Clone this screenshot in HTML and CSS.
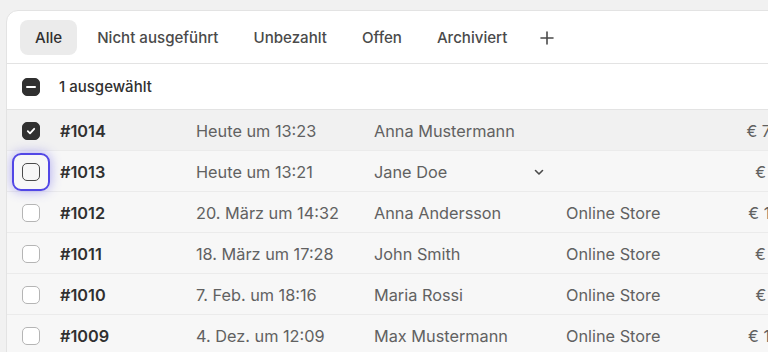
FILE: index.html
```html
<!DOCTYPE html>
<html lang="de">
<head>
    <meta charset="UTF-8">
    <meta name="viewport" content="width=device-width, initial-scale=1.0">
    <title>Bestellungen</title>
    <link rel="stylesheet" href="styles.css">
</head>
<body>

    <div class="orders-card">
        <!-- Filter tabs -->
        <div class="tabs">
            <button class="tab active">Alle</button>
            <button class="tab">Nicht ausgeführt</button>
            <button class="tab">Unbezahlt</button>
            <button class="tab">Offen</button>
            <button class="tab">Archiviert</button>
            <button class="tab add-tab" aria-label="Ansicht hinzufügen">
                <svg width="20" height="20" viewBox="0 0 20 20"><path d="M10 4v12M4 10h12" stroke="#4a4a4a" stroke-width="1.6" stroke-linecap="round"/></svg>
            </button>
        </div>

        <!-- Bulk selection -->
        <div class="bulk-bar">
            <span class="checkbox indeterminate">
                <svg width="12" height="12" viewBox="0 0 12 12"><path d="M2 6h8" stroke="#fff" stroke-width="2" stroke-linecap="round"/></svg>
            </span>
            <span class="bulk-label">1 ausgewählt</span>
        </div>

        <div class="rows">
            <div class="row selected">
                <div class="cell"><span class="checkbox checked">
                    <svg width="12" height="12" viewBox="0 0 12 12"><path d="M2.8 6.2l2.2 2.2 4.2-4.6" fill="none" stroke="#fff" stroke-width="1.8" stroke-linecap="round" stroke-linejoin="round"/></svg>
                </span></div>
                <div class="cell order">#1014</div>
                <div class="cell">Heute um 13:23</div>
                <div class="cell">Anna Mustermann</div>
                <div class="cell"></div>
                <div class="cell total">€ 74,90</div>
            </div>
            <div class="row">
                <div class="cell"><span class="focus-ring"><span class="checkbox focused"></span></span></div>
                <div class="cell order">#1013</div>
                <div class="cell">Heute um 13:21</div>
                <div class="cell">Jane Doe
                    <svg class="chevron" width="14" height="14" viewBox="0 0 14 14"><path d="M3.5 5.5l3.5 3.5 3.5-3.5" fill="none" stroke="#4a4a4a" stroke-width="1.6" stroke-linecap="round" stroke-linejoin="round"/></svg>
                </div>
                <div class="cell"></div>
                <div class="cell total">€ 8,50</div>
            </div>
            <div class="row">
                <div class="cell"><span class="checkbox"></span></div>
                <div class="cell order">#1012</div>
                <div class="cell">20. März um 14:32</div>
                <div class="cell">Anna Andersson</div>
                <div class="cell">Online Store</div>
                <div class="cell total">€ 12,99</div>
            </div>
            <div class="row">
                <div class="cell"><span class="checkbox"></span></div>
                <div class="cell order">#1011</div>
                <div class="cell">18. März um 17:28</div>
                <div class="cell">John Smith</div>
                <div class="cell">Online Store</div>
                <div class="cell total">€ 9,00</div>
            </div>
            <div class="row">
                <div class="cell"><span class="checkbox"></span></div>
                <div class="cell order">#1010</div>
                <div class="cell">7. Feb. um 18:16</div>
                <div class="cell">Maria Rossi</div>
                <div class="cell">Online Store</div>
                <div class="cell total">€ 6,25</div>
            </div>
            <div class="row">
                <div class="cell"><span class="checkbox"></span></div>
                <div class="cell order">#1009</div>
                <div class="cell">4. Dez. um 12:09</div>
                <div class="cell">Max Mustermann</div>
                <div class="cell">Online Store</div>
                <div class="cell total">€ 15,40</div>
            </div>
        </div>
    </div>

</body>
</html>
```

FILE: styles.css
```css
body {
    font-family: 'Inter', 'Noto Sans', sans-serif;
    margin: 0;
    padding: 10px 0 0 6px;
    background-color: #f1f1f1;
    overflow: hidden;
    color: #303030;
}

.orders-card {
    width: 860px;
    background-color: white;
    border: 1px solid #e3e3e3;
    border-radius: 12px 0 0 0;
    overflow: hidden;
}

.tabs {
    display: flex;
    align-items: center;
    gap: 5px;
    padding: 9px 13px 8px;
    border-bottom: 1px solid #e3e3e3;
}

.tab {
    font-family: inherit;
    font-size: 15.1px;
    font-weight: 500;
    color: #4a4a4a;
    background: none;
    border: none;
    border-radius: 8px;
    height: 35px;
    padding: 0 15px;
    cursor: pointer;
}

.tab.active {
    background-color: #ebebeb;
    color: #303030;
}

.add-tab {
    display: flex;
    align-items: center;
    padding: 0 10px;
}

.bulk-bar {
    display: flex;
    align-items: center;
    height: 45px;
    padding-left: 15px;
    border-bottom: 1px solid #e3e3e3;
}

.bulk-label {
    margin-left: 19px;
    font-size: 15px;
    font-weight: 500;
}

.checkbox {
    display: flex;
    align-items: center;
    justify-content: center;
    box-sizing: border-box;
    width: 18px;
    height: 18px;
    border: 1px solid #b5b5b5;
    border-radius: 5px;
    background-color: white;
}

.checkbox.checked,
.checkbox.indeterminate {
    background-color: #303030;
    border-color: #303030;
}

.checkbox.focused {
    background-color: #f7f7f7;
    border: 1.5px solid #4a4a4a;
}

.focus-ring {
    display: flex;
    align-items: center;
    justify-content: center;
    box-sizing: border-box;
    width: 38px;
    height: 38px;
    margin: -10px;
    border: 2.5px solid #5247e6;
    border-radius: 9px;
    box-shadow: 0 0 12px rgba(82, 71, 230, 0.45);
}

.row {
    display: grid;
    grid-template-columns: 53px 136px 178px 192px 134px 105px;
    align-items: center;
    height: 39px;
    padding-top: 1px;
    background-color: #f7f7f7;
    border-bottom: 1px solid #ebebeb;
    font-size: 16.3px;
    color: #616161;
}

.row.selected {
    background-color: #f1f1f1;
}

.cell {
    display: flex;
    align-items: center;
}

.cell:first-child {
    padding-left: 15px;
}

.order {
    font-weight: 600;
    color: #303030;
}

.chevron {
    margin-left: 85px;
}

.total {
    justify-content: flex-end;
}
```
